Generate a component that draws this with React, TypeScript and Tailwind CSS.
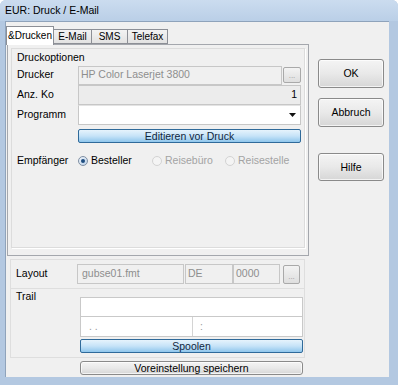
import React from "react";

const F = "font-['Liberation_Sans',Arial,sans-serif]";

function Radio({ checked, disabled, label, className = "" }: { checked?: boolean; disabled?: boolean; label: string; className?: string }) {
  return (
    <div className={`flex items-center ${className}`}>
      {checked ? (
        <span className="flex h-[10px] w-[10px] items-center justify-center rounded-full border border-[#7f8fa3] bg-gradient-to-br from-[#eef4fb] to-[#bcd1e8]">
          <span className="h-[4px] w-[4px] rounded-full bg-[#1f4d80]" />
        </span>
      ) : (
        <span className="h-[10px] w-[10px] rounded-full border border-[#d3d3d3] bg-[#f4f4f4]" />
      )}
      <span className={`ml-[3px] ${disabled ? "text-[#a3a3a3]" : "text-black"}`}>{label}</span>
    </div>
  );
}

function DotsBtn({ className = "" }: { className?: string }) {
  return (
    <div className={`flex items-end justify-center rounded-[2px] border border-[#a9a9a9] bg-gradient-to-b from-[#f3f3f3] to-[#dedede] pb-[2px] text-[8px] leading-none text-[#9a9a9a] ${className}`}>
      ...
    </div>
  );
}

function BlueBtn({ children, className = "" }: { children: React.ReactNode; className?: string }) {
  return (
    <div className={`flex items-center justify-center rounded-[2px] border border-[#2f6a9a] bg-gradient-to-b from-[#e6f3fc] via-[#c6e3f8] to-[#8fc6ec] leading-none text-[#10263d] ${className}`}>
      {children}
    </div>
  );
}

function GrayBtn({ children, className = "" }: { children: React.ReactNode; className?: string }) {
  return (
    <div className={`flex items-center justify-center rounded-[3px] border border-[#8a8a8a] bg-gradient-to-b from-[#f4f4f4] via-[#e9e9e9] to-[#d6d6d6] leading-none text-black shadow-[inset_0_0_0_1px_rgba(255,255,255,0.7)] ${className}`}>
      {children}
    </div>
  );
}

export default function App() {
  return (
    <div className={`${F} flex h-[385px] w-[398px] flex-col overflow-hidden rounded-t-[6px] bg-[#b3c8e1] text-[10.5px] text-black`}>
      {/* title bar */}
      <div className="flex h-[21px] items-center bg-gradient-to-b from-[#cbdcef] to-[#bacfe7] pl-[5px] text-[10.5px] text-black">
        EUR: Druck / E-Mail
      </div>
      <div className="flex pl-[5px]">
        {/* client */}
        <div className="flex h-[356px] w-[384px] border-l border-t border-[#8fa3bb] bg-[#f0f0f0]">
          {/* left column */}
          <div className="flex w-[303px] flex-col">
            {/* tabs */}
            <div className="relative z-10 flex h-[22px] items-end text-[10px]">
              <div className="-mb-px flex h-[19px] w-[48px] items-center justify-center border border-b-0 border-[#8c8f96] bg-white pb-[2px]">
                &amp;Drucken
              </div>
              <div className="flex h-[15px] w-[38px] items-center justify-center border border-l-0 border-[#8c8f96] bg-gradient-to-b from-[#f3f3f3] to-[#e2e2e2]">
                E-Mail
              </div>
              <div className="flex h-[15px] w-[36px] items-center justify-center border border-l-0 border-[#8c8f96] bg-gradient-to-b from-[#f3f3f3] to-[#e2e2e2]">
                SMS
              </div>
              <div className="flex h-[15px] w-[40px] items-center justify-center border border-l-0 border-[#8c8f96] bg-gradient-to-b from-[#f3f3f3] to-[#e2e2e2]">
                Telefax
              </div>
            </div>
            {/* tab panel */}
            <div className="ml-[1px] h-[212px] w-[302px] border border-[#a4a7ad] bg-[#f0f0f0] p-[3px]">
              <div className="h-[201px] w-[295px] border border-[#dcdcdc] border-r-white border-b-white shadow-[inset_-1px_-1px_0_#dcdcdc]">
                <div className="mt-[2px] pl-[5px] leading-[12px]">Druckoptionen</div>
                <div className="mt-[2px] flex h-[20px] items-center">
                  <div className="w-[66px] pl-[5px]">Drucker</div>
                  <div className="flex h-[19px] w-[204px] items-center border border-[#c7c7c7] bg-[#f0f0f0] pl-[2px] text-[#8e8e8e]">
                    HP Color Laserjet 3800
                  </div>
                  <DotsBtn className="ml-[1px] h-[16px] w-[18px]" />
                </div>
                <div className="flex h-[20px] items-center">
                  <div className="w-[66px] pl-[5px]">Anz. Ko</div>
                  <div className="flex h-[20px] w-[223px] items-center justify-end border border-[#c7c7c7] bg-[#ececec] pr-[3px]">
                    1
                  </div>
                </div>
                <div className="flex h-[20px] items-center">
                  <div className="w-[66px] pl-[5px]">Programm</div>
                  <div className="flex h-[20px] w-[223px] items-center justify-end border border-[#c7c7c7] border-t-[#e3e3e3] bg-white pr-[4px]">
                    <svg width="7" height="4" viewBox="0 0 7 4">
                      <path d="M0 0 H7 L3.5 4 Z" fill="#111" />
                    </svg>
                  </div>
                </div>
                <BlueBtn className="ml-[66px] mt-[4px] h-[14px] w-[223px]">Editieren vor Druck</BlueBtn>
                <div className="mt-[10px] flex h-[16px] items-center">
                  <div className="w-[66px] pl-[5px]">Empfänger</div>
                  <Radio checked label="Besteller" className="w-[74px]" />
                  <Radio disabled label="Reisebüro" className="w-[73px]" />
                  <Radio disabled label="Reisestelle" />
                </div>
              </div>
            </div>
            {/* layout box */}
            <div className="ml-[4px] mt-[3px] flex h-[29px] w-[295px] items-center border border-[#dedede] border-b-0">
              <div className="w-[66px] pl-[5px]">Layout</div>
              <div className="flex h-[20px] w-[107px] items-center border border-[#c7c7c7] bg-[#f0f0f0] pl-[4px] text-[#8e8e8e]">
                gubse01.fmt
              </div>
              <div className="ml-[1px] flex h-[20px] w-[48px] items-center border border-[#c7c7c7] bg-[#f0f0f0] pl-[2px] text-[#8e8e8e]">
                DE
              </div>
              <div className="flex h-[20px] w-[47px] items-center border border-[#c7c7c7] bg-[#f0f0f0] pl-[2px] text-[#8e8e8e]">
                0000
              </div>
              <DotsBtn className="ml-[3px] h-[19px] w-[17px]" />
            </div>
            {/* trail box */}
            <div className="ml-[4px] flex h-[70px] w-[295px] border border-[#dedede]">
              <div className="w-[69px] pl-[5px] pt-[1px] leading-[12px]">Trail</div>
              <div className="flex w-[223px] flex-col">
                <div className="mt-[8px] h-[20px] border border-[#c9c9c9] bg-white" />
                <div className="flex h-[20px] border border-t-0 border-[#c9c9c9] bg-white text-[#9a9a9a]">
                  <div className="flex w-[112px] items-center border-r border-[#d4d4d4] pl-[8px]">. .</div>
                  <div className="flex items-center pl-[7px]">:</div>
                </div>
                <BlueBtn className="mt-[2px] h-[14px] w-[223px]">Spoolen</BlueBtn>
              </div>
            </div>
            <GrayBtn className="ml-[74px] mt-[3px] h-[14px] w-[223px] rounded-[2px]">Voreinstellung speichern</GrayBtn>
          </div>
          {/* right column */}
          <div className="ml-[9px] flex w-[66px] flex-col">
            <GrayBtn className="mt-[37px] h-[29px] w-[66px]">OK</GrayBtn>
            <GrayBtn className="mt-[10px] h-[29px] w-[66px]">Abbruch</GrayBtn>
            <GrayBtn className="mt-[26px] h-[28px] w-[66px]">Hilfe</GrayBtn>
          </div>
        </div>
      </div>
    </div>
  );
}
